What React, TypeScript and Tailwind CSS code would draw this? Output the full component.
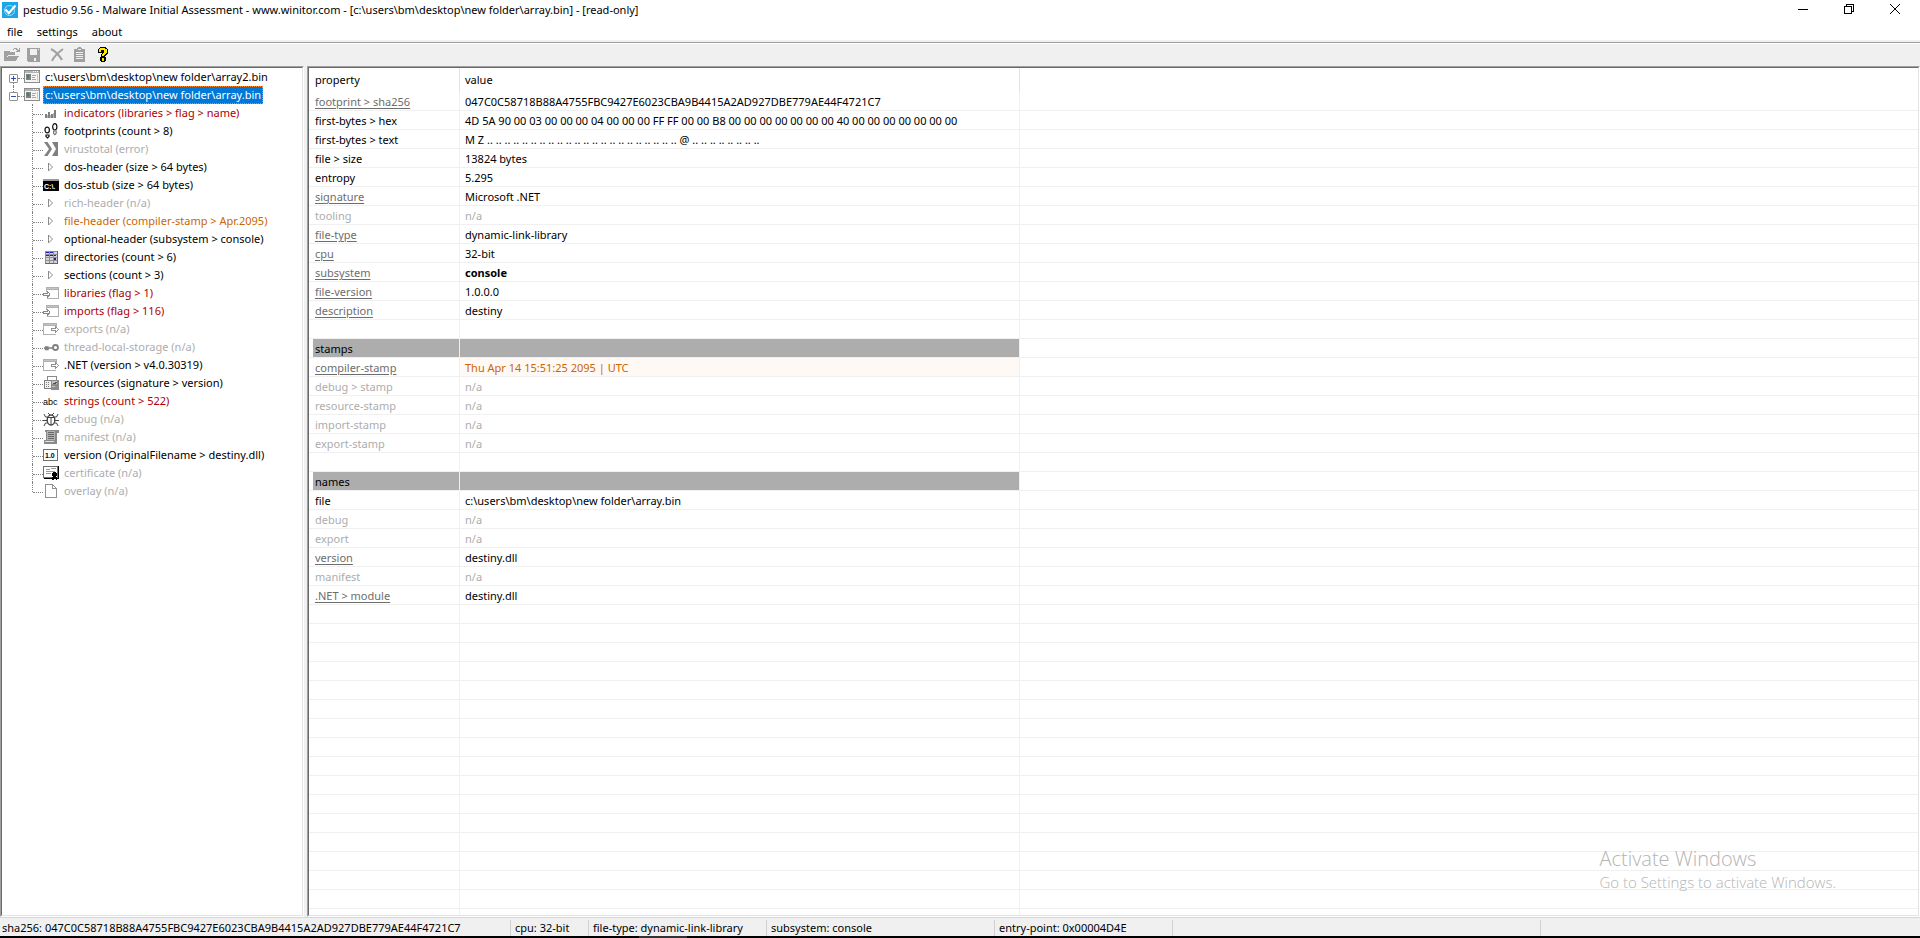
import { ReactNode, useState } from "react";

type Tone = "normal" | "muted" | "flag" | "warn";

const tones: Record<Tone, string> = {
  normal: "text-black",
  muted: "text-[#adadad]",
  flag: "text-[#ad0000]",
  warn: "text-[#cc6600]",
};

const Icon = ({ children }: { children: ReactNode }) => (
  <svg
    viewBox="0 0 16 16"
    shapeRendering="crispEdges"
    className="h-4 w-4 shrink-0"
    aria-hidden="true"
  >
    {children}
  </svg>
);

const AppIcon = () => (
  <svg viewBox="0 0 16 16" className="h-4 w-4 shrink-0" aria-hidden="true">
    <rect width="16" height="16" fill="#1ba5ea" />
    <circle cx="7.5" cy="8.5" r="5" fill="none" stroke="#9fdcf8" strokeWidth="1" />
    <path d="M3.5 7.5 6.8 11.2 13.5 3.5" fill="none" stroke="#fff" strokeWidth="2.2" />
  </svg>
);

const OpenIcon = () => (
  <Icon>
    <path d="M0 4h5l1 1h5v3H4l-3 6H0z" fill="#a0a0a0" />
    <path d="M4 9h11l-3 5H1z" fill="#a0a0a0" />
    <path d="M9 2h1V1h3v1h1v1h1V1h1v4h-4V4h1V3h-1V2h-2v1H9z" fill="#a0a0a0" />
    <path d="M4 8.500h8" stroke="#f0f0f0" />
  </Icon>
);

const SaveIcon = () => (
  <Icon>
    <path d="M0 1h13v14H1l-1-1z" fill="#a0a0a0" />
    <rect x="3" y="2" width="7" height="6" fill="#f0f0f0" />
    <rect x="7" y="11" width="2" height="3" fill="#f0f0f0" />
    <rect x="11" y="2" width="1" height="1" fill="#f0f0f0" />
  </Icon>
);

const DeleteIcon = () => (
  <svg viewBox="0 0 16 16" className="h-4 w-4 shrink-0" aria-hidden="true">
    <path d="M1 2c4 2 8 6 11 11M13 2C9 5 4 9 2 14" fill="none" stroke="#a0a0a0" strokeWidth="2" />
  </svg>
);

const ClipboardIcon = () => (
  <Icon>
    <path d="M1 2h3V1h1V0h3v1h1v1h3v13H1z" fill="#a0a0a0" />
    <path d="M3 5.5h7M3 7.5h7M3 9.5h7M3 11.5h7" stroke="#f0f0f0" />
    <rect x="5" y="2" width="3" height="1" fill="#f0f0f0" />
  </Icon>
);

const HelpIcon = () => (
  <Icon>
    <path
      d="M3 1h1V0h6v1h1v1h1v5h-1v1h-1v1H9v1h1v4H9v1H5v-1H4v-4h1V7h1V6H2V2h1z"
      fill="#000"
    />
    <path d="M4 1h5v1h2v4h-1v1H9v1H8v1H6V7h1V6h1V3H5v2H3V2h1zM6 11h2v3H6z" fill="#ffea00" />
  </Icon>
);

const BinIcon = () => (
  <Icon>
    <rect x="0.5" y="1.5" width="15" height="12" fill="#f4f4f4" stroke="#8c8c8c" />
    <rect x="1" y="2" width="14" height="2" fill="#b4b4b4" />
    <path d="M9 2h1v1H9zM11 2h1v1h-1zM13 2h1v1h-1z" fill="#fff" />
    <rect x="2" y="5" width="5" height="6" fill="#7c8482" />
    <rect x="3" y="6" width="2" height="3" fill="#3f7f78" />
    <path d="M8 6.500h4M8 8.500h3M8 10.500h4" stroke="#a8a8a8" />
    <path d="M13 5h1v7h-1z" fill="#c8c8c8" />
  </Icon>
);

const BarsIcon = () => (
  <Icon>
    <path d="M2 9h2v4H2zM5 7h2v6H5zM8 9h2v4H8zM11 5h2v8h-2z" fill="#808080" />
    <path d="M4 10h1v3H4zM7 10h1v3H7zM10 8h1v5h-1z" fill="#b8b8b8" />
  </Icon>
);

const FootprintsIcon = () => (
  <svg viewBox="0 0 16 16" className="h-4 w-4 shrink-0" aria-hidden="true">
    <g fill="#fff" stroke="#111" strokeWidth="1.2">
      <ellipse cx="4.2" cy="7" rx="2.2" ry="2.9" />
      <path d="M3 12h3v1.5L4.5 15 3 13.5z" />
      <ellipse cx="11.8" cy="3.8" rx="2.1" ry="3.2" />
      <path d="M10.6 8h2.6v2.2l-1.3 1.4-1.3-1.2z" stroke="#777" />
    </g>
  </svg>
);

const TotalIcon = () => (
  <svg viewBox="0 0 16 16" className="h-4 w-4 shrink-0" aria-hidden="true">
    <path d="M1 1h14v14H1l5-7z" fill="#808080" />
    <path d="M4.500 1H9L13 8 9 15H4.500L9 8z" fill="#fff" />
  </svg>
);

const ArrowIcon = () => (
  <svg viewBox="0 0 16 16" className="h-4 w-4 shrink-0" aria-hidden="true">
    <path d="M5.500 4v8L9.500 8z" fill="#fff" stroke="#8c8c8c" />
  </svg>
);

const ConsoleIcon = () => (
  <Icon>
    <rect x="0" y="2" width="16" height="12" fill="#000" />
    <rect x="0" y="2" width="16" height="2" fill="#9a9a9a" />
    <text x="1" y="12" fontSize="7" fontWeight="bold" fontFamily="Liberation Sans" fill="#fff">
      C:\.
    </text>
  </Icon>
);

const DirectoriesIcon = () => (
  <Icon>
    <rect x="2" y="2" width="12" height="12" fill="#d4d4d4" />
    <path d="M2 2h12v1H2zM2 5h12v1H2zM2 8h12v1H2zM2 11h12v1H2zM2 2h1v12H2zM6 2h1v12H6zM10 2h1v12h-1z" fill="#909090" />
    <path d="M3 3h3v1H3zM3 6h3v1H3zM7 3h3v1H7zM7 6h3v1H7zM11 6h2v1h-2zM11 9h2v2h-2z" fill="#1c1cc8" />
    <path d="M14 2h1v13H2v-1h12z" fill="#2a8080" />
  </Icon>
);

const ImportIcon = () => (
  <Icon>
    <path d="M3 2h13v12H4v-2h1v1h10V5H4v2H3z" fill="#b0b0b0" />
    <path d="M4 3h11v1H4z" fill="#c4c4c4" />
    <path d="M0 8h4V6h1v1h1v1h1v3H6v1H5v1H4v-2H0z" fill="#888" />
    <path d="M1 9h4V8h1v2H1z" fill="#fff" />
  </Icon>
);

const ExportIcon = () => (
  <Icon>
    <path d="M0 2h14v4h-1V5H1v8h12v1H0z" fill="#b0b0b0" />
    <path d="M1 3h12v1H1z" fill="#c4c4c4" />
    <path d="M8 7h4V5h1v1h1v1h1v1h1v1h-1v1h-1v1h-1v1h-1v-2H8z" fill="#909090" />
    <path d="M9 8h4V7h1v1h1v1h-1v1h-1V9H9z" fill="#fff" />
  </Icon>
);

const KeyIcon = () => (
  <svg viewBox="0 0 16 16" className="h-4 w-4 shrink-0" aria-hidden="true">
    <circle cx="12.500" cy="8.500" r="2.500" fill="#fff" stroke="#808080" strokeWidth="1.800" />
    <path d="M1 9h9M2.500 8h2.500v2.500H2.500z" fill="#808080" stroke="#808080" strokeWidth="1.400" />
  </svg>
);

const ResourcesIcon = () => (
  <Icon>
    <path d="M4 1h9v5H4z" fill="#fff" stroke="#8a8a8a" />
    <path d="M1 5h7v8H1z" fill="#f0f0f0" />
    <path d="M1 5h7v1H1zM1 5h1v9H1zM1 13h9v1H1zM3 7h1v1H3zM5 7h1v1H5zM3 9h1v1H3zM5 9h1v1H5zM3 11h1v1H3zM5 11h1v1H5z" fill="#808080" />
    <rect x="8" y="5" width="8" height="10" fill="#8c8c8c" />
    <path d="M9 6h5v3H9zM9 11h3v1H9z" fill="#c4c4c4" />
    <path d="M10 8h3v1h-3zM12 7h2v1h-2z" fill="#505050" />
  </Icon>
);

const StringsIcon = () => (
  <Icon>
    <text x="0" y="12" fontSize="9" fontFamily="Liberation Sans" fill="#000">
      abc
    </text>
  </Icon>
);

const BugIcon = () => (
  <svg viewBox="0 0 16 16" className="h-4 w-4 shrink-0" aria-hidden="true">
    <ellipse cx="8" cy="9" rx="3.800" ry="5" fill="#fff" stroke="#444" strokeWidth="1.400" />
    <path
      d="M4.500 6.500h7M8 7v7M5 2l2 2M11 2 9 4M1 3l1.500 3h2M15 3l-1.500 3h-2M0 9.500h4M12 9.500h4M1 15l1.500-3h2M15 15l-1.500-3h-2"
      fill="none"
      stroke="#444"
    />
  </svg>
);

const ManifestIcon = () => (
  <Icon>
    <path d="M2 1h14v3h-2v11H1v-4h2V3H2z" fill="#8a8a8a" />
    <path d="M4 2h8v9H4z" fill="#b4b4b4" />
    <path d="M5 3.500h6M5 5.500h6M5 7.500h6M5 9.500h6" stroke="#666" />
    <path d="M2 12h9v1H2z" fill="#ddd" />
  </Icon>
);

const VersionIcon = () => (
  <Icon>
    <rect x="0.500" y="2.500" width="14" height="11" fill="#fff" stroke="#707070" />
    <text x="2" y="11" fontSize="7" fontWeight="bold" fontFamily="Liberation Sans" fill="#000">
      1.0
    </text>
  </Icon>
);

const CertificateIcon = () => (
  <Icon>
    <rect x="0.500" y="1.500" width="14" height="11" fill="#fff" stroke="#707070" />
    <path d="M15 1h1v12h-1zM1 13h15v1H1z" fill="#000" />
    <path d="M3 4.500h4M8 3.500h5M3 6.500h9M3 8.500h5" stroke="#999" />
    <path d="M10 7h3v1h1v3h-1v1h1v3h-1v-1h-2v1H9v-3h1v-1H9V8h1z" fill="#000" />
  </Icon>
);

const OverlayIcon = () => (
  <Icon>
    <path d="M2.500 1.500h7l4 4v9h-11z" fill="#fff" stroke="#909090" />
    <path d="M9.500 1.500v4h4" fill="none" stroke="#909090" />
  </Icon>
);

type Node = { icon: () => ReactNode; label: string; tone?: Tone };

const nodes: Node[] = [
  { icon: BarsIcon, label: "indicators (libraries > flag > name)", tone: "flag" },
  { icon: FootprintsIcon, label: "footprints (count > 8)" },
  { icon: TotalIcon, label: "virustotal (error)", tone: "muted" },
  { icon: ArrowIcon, label: "dos-header (size > 64 bytes)" },
  { icon: ConsoleIcon, label: "dos-stub (size > 64 bytes)" },
  { icon: ArrowIcon, label: "rich-header (n/a)", tone: "muted" },
  { icon: ArrowIcon, label: "file-header (compiler-stamp > Apr.2095)", tone: "warn" },
  { icon: ArrowIcon, label: "optional-header (subsystem > console)" },
  { icon: DirectoriesIcon, label: "directories (count > 6)" },
  { icon: ArrowIcon, label: "sections (count > 3)" },
  { icon: ImportIcon, label: "libraries (flag > 1)", tone: "flag" },
  { icon: ImportIcon, label: "imports (flag > 116)", tone: "flag" },
  { icon: ExportIcon, label: "exports (n/a)", tone: "muted" },
  { icon: KeyIcon, label: "thread-local-storage (n/a)", tone: "muted" },
  { icon: ExportIcon, label: ".NET (version > v4.0.30319)" },
  { icon: ResourcesIcon, label: "resources (signature > version)" },
  { icon: StringsIcon, label: "strings (count > 522)", tone: "flag" },
  { icon: BugIcon, label: "debug (n/a)", tone: "muted" },
  { icon: ManifestIcon, label: "manifest (n/a)", tone: "muted" },
  { icon: VersionIcon, label: "version (OriginalFilename > destiny.dll)" },
  { icon: CertificateIcon, label: "certificate (n/a)", tone: "muted" },
  { icon: OverlayIcon, label: "overlay (n/a)", tone: "muted" },
];

type Row = {
  name?: string;
  value?: string;
  kind?: "link" | "muted" | "section" | "stamp" | "bold";
};

const rows: Row[] = [
  { name: "footprint > sha256", value: "047C0C58718B88A4755FBC9427E6023CBA9B4415A2AD927DBE779AE44F4721C7", kind: "link" },
  { name: "first-bytes > hex", value: "4D 5A 90 00 03 00 00 00 04 00 00 00 FF FF 00 00 B8 00 00 00 00 00 00 00 40 00 00 00 00 00 00 00" },
  { name: "first-bytes > text", value: "M Z .. .. .. .. .. .. .. .. .. .. .. .. .. .. .. .. .. .. .. .. .. .. @ .. .. .. .. .. .. .. .." },
  { name: "file > size", value: "13824 bytes" },
  { name: "entropy", value: "5.295" },
  { name: "signature", value: "Microsoft .NET", kind: "link" },
  { name: "tooling", value: "n/a", kind: "muted" },
  { name: "file-type", value: "dynamic-link-library", kind: "link" },
  { name: "cpu", value: "32-bit", kind: "link" },
  { name: "subsystem", value: "console", kind: "bold" },
  { name: "file-version", value: "1.0.0.0", kind: "link" },
  { name: "description", value: "destiny", kind: "link" },
  {},
  { name: "stamps", kind: "section" },
  { name: "compiler-stamp", value: "Thu Apr 14 15:51:25 2095 | UTC", kind: "stamp" },
  { name: "debug > stamp", value: "n/a", kind: "muted" },
  { name: "resource-stamp", value: "n/a", kind: "muted" },
  { name: "import-stamp", value: "n/a", kind: "muted" },
  { name: "export-stamp", value: "n/a", kind: "muted" },
  {},
  { name: "names", kind: "section" },
  { name: "file", value: "c:\\users\\bm\\desktop\\new folder\\array.bin" },
  { name: "debug", value: "n/a", kind: "muted" },
  { name: "export", value: "n/a", kind: "muted" },
  { name: "version", value: "destiny.dll", kind: "link" },
  { name: "manifest", value: "n/a", kind: "muted" },
  { name: ".NET > module", value: "destiny.dll", kind: "link" },
];

// the grid keeps drawing empty rows down to the bottom of the pane
const emptyRows: Row[] = Array.from({ length: 17 }, () => ({}));

const TitleBar = () => (
  <header className="flex h-[22px] items-start justify-between pr-[2px]">
    <div className="flex items-center gap-[5px] pl-[2px]">
      <AppIcon />
      <h1 className="leading-[20px]">
        pestudio 9.56 - Malware Initial Assessment - www.winitor.com -
        [c:\users\bm\desktop\new folder\array.bin] - [read-only]
      </h1>
    </div>
    <div className="flex">
      <button aria-label="Minimize" className="flex h-[18px] w-[46px] items-center justify-center">
        <svg viewBox="0 0 10 10" shapeRendering="crispEdges" className="h-[10px] w-[10px]">
          <path d="M0 5.500h10" stroke="#000" />
        </svg>
      </button>
      <button aria-label="Restore" className="flex h-[18px] w-[46px] items-center justify-center">
        <svg viewBox="0 0 10 10" shapeRendering="crispEdges" className="h-[10px] w-[10px]">
          <path d="M0.500 2.500h7v7h-7zM2.500 2.500v-2h7v7h-2" fill="none" stroke="#000" />
        </svg>
      </button>
      <button aria-label="Close" className="flex h-[18px] w-[46px] items-center justify-center">
        <svg viewBox="0 0 10 10" className="h-[10px] w-[10px]">
          <path d="M0 0l10 10M10 0 0 10" stroke="#000" />
        </svg>
      </button>
    </div>
  </header>
);

const MenuBar = () => (
  <nav className="flex h-[18px] items-end gap-[14px] pl-[7px]">
    <button className="leading-[16px]">file</button>
    <button className="leading-[16px]">settings</button>
    <button className="leading-[16px]">about</button>
  </nav>
);

const Toolbar = () => (
  <div className="border-t-2 border-[#f0f0f0]">
    <div className="border-t border-[#a0a0a0]">
      <div className="flex h-[23px] items-center gap-[7px] border-t border-white bg-[#f0f0f0] pl-1">
        <button aria-label="open"><OpenIcon /></button>
        <button aria-label="save"><SaveIcon /></button>
        <button aria-label="delete"><DeleteIcon /></button>
        <button aria-label="copy"><ClipboardIcon /></button>
        <button aria-label="help"><HelpIcon /></button>
      </div>
    </div>
  </div>
);

// sunken two-step border round a pane
const Pane = ({ className, children }: { className: string; children: ReactNode }) => (
  <section className={`flex border border-t-[#a0a0a0] border-r-white border-b-white border-l-[#a0a0a0] ${className}`}>
    <div className="min-h-0 min-w-0 flex-1 overflow-hidden border border-t-[#696969] border-r-[#e3e3e3] border-b-[#e3e3e3] border-l-[#696969] bg-white">
      {children}
    </div>
  </section>
);

type RootProps = {
  label: string;
  open: boolean;
  first?: boolean;
  selected?: boolean;
  onToggle: () => void;
};

const RootRow = ({ label, open, first, selected, onToggle }: RootProps) => (
  <div className="flex h-[18px] items-center pl-[7px]">
    <div className="flex h-[18px] w-[9px] flex-col items-center">
      <span className={`h-[6px] border-l border-dotted ${first ? "border-transparent" : "border-[#808080]"}`} />
      <button
        aria-label={open ? "collapse" : "expand"}
        onClick={onToggle}
        className="flex h-[9px] w-[9px] items-center justify-center rounded-[1px] border border-[#919191] bg-white"
      >
        <svg viewBox="0 0 5 5" shapeRendering="crispEdges" className="h-[5px] w-[5px]">
          <path d={open ? "M0 2h5v1H0z" : "M0 2h5v1H0zM2 0h1v5H2z"} fill="#2a4fb0" />
        </svg>
      </button>
      <span className={`h-[3px] border-l border-dotted ${first ? "border-[#808080]" : "border-transparent"}`} />
    </div>
    <span className="mt-[2px] w-[6px] border-t border-dotted border-[#808080]" />
    <BinIcon />
    <button
      className={`ml-[3px] border border-dotted px-px leading-[16px] ${
        selected ? "border-[#ff8728] bg-[#0078d7] text-white" : "border-transparent"
      }`}
    >
      {label}
    </button>
  </div>
);

const Tree = () => {
  const [open, setOpen] = useState([false, true]);

  const toggle = (i: number) => {
    setOpen((prev) => prev.map((val, n) => (n === i ? !val : val)));
  };

  return (
    <ul className="whitespace-nowrap">
      <li>
        <RootRow
          first
          label="c:\users\bm\desktop\new folder\array2.bin"
          open={open[0]}
          onToggle={() => toggle(0)}
        />
      </li>
      <li>
        <RootRow
          selected
          label="c:\users\bm\desktop\new folder\array.bin"
          open={open[1]}
          onToggle={() => toggle(1)}
        />
        {open[1] && (
          <ul>
            {nodes.map(({ icon: NodeIcon, label, tone = "normal" }, i) => (
              <li key={label} className="flex h-[18px] items-center pl-[30px]">
                <span
                  className={`w-[11px] self-start border-l border-dotted border-[#808080] ${
                    i === nodes.length - 1 ? "h-[10px]" : "h-[18px]"
                  }`}
                >
                  <span className="block h-[11px] border-b border-dotted border-[#808080]" />
                </span>
                <NodeIcon />
                <button className={`pl-[5px] ${tones[tone]}`}>{label}</button>
              </li>
            ))}
          </ul>
        )}
      </li>
    </ul>
  );
};

const GridRow = ({ name, value, kind }: Row) => {
  const isLink = kind === "link" || kind === "stamp" || kind === "bold";
  const muted = kind === "muted" ? "text-[#adadad]" : "";

  return (
    <tr className="h-[19px] leading-[16px]">
      <td className={`border-r border-b border-[#f0f0f0] p-0 pl-1 ${muted}`}>
        <div className={`h-[18px] pt-[2px] pl-[2px] ${kind === "section" ? "bg-[#adadad]" : ""}`}>
          {isLink ? (
            <a href="#" className="text-[#6d6d6d] underline underline-offset-2">
              {name}
            </a>
          ) : (
            name
          )}
        </div>
      </td>
      <td
        className={`border-r border-b border-[#f0f0f0] p-0 pt-[2px] pl-[5px] ${muted} ${
          kind === "section" ? "bg-[#adadad] bg-clip-padding" : ""
        } ${kind === "stamp" ? "bg-[#fff9f5] text-[#cc6600]" : ""} ${kind === "bold" ? "font-bold" : ""}`}
      >
        {value}
      </td>
      <td className="border-b border-[#f0f0f0] p-0" />
    </tr>
  );
};

const PropertyGrid = () => (
  <table className="w-full table-fixed border-separate border-spacing-0 whitespace-nowrap">
    <colgroup>
      <col className="w-[151px]" />
      <col className="w-[560px]" />
      <col />
    </colgroup>
    <thead>
      <tr className="h-[24px]">
        <th className="border-r border-[#e5e5e5] p-0 pl-[6px] text-left font-normal">property</th>
        <th className="border-r border-[#e5e5e5] p-0 pl-[5px] text-left font-normal">value</th>
        <td />
      </tr>
    </thead>
    <tbody>
      {[...rows, ...emptyRows].map((row, i) => (
        <GridRow key={i} {...row} />
      ))}
    </tbody>
  </table>
);

const StatusBar = () => (
  <footer className="flex h-[19px] items-end border-t border-[#d7d7d7] bg-[#f0f0f0] leading-[16px] whitespace-nowrap">
    <span className="w-[511px] border-r border-[#d0d0d0] pl-[2px]">
      sha256: 047C0C58718B88A4755FBC9427E6023CBA9B4415A2AD927DBE779AE44F4721C7
    </span>
    <span className="w-[78px] border-r border-[#d0d0d0] pl-1">cpu: 32-bit</span>
    <span className="w-[178px] border-r border-[#d0d0d0] pl-1">file-type: dynamic-link-library</span>
    <span className="w-[228px] border-r border-[#d0d0d0] pl-1">subsystem: console</span>
    <span className="w-[178px] border-r border-[#d0d0d0] pl-1">entry-point: 0x00004D4E</span>
    <span className="h-[16px] w-[368px] border-r border-[#d0d0d0]" />
  </footer>
);

export default function App() {
  return (
    <div className="relative flex h-screen flex-col overflow-hidden bg-white font-['Noto_Sans',sans-serif] text-[11px] leading-[18px] text-black">
      <TitleBar />
      <MenuBar />
      <Toolbar />
      <main className="flex min-h-0 flex-1 bg-[#f0f0f0]">
        <Pane className="w-[304px] shrink-0">
          <Tree />
        </Pane>
        <Pane className="ml-[3px] min-w-0 flex-1">
          <PropertyGrid />
        </Pane>
      </main>
      <StatusBar />
      <div className="flex h-[2px] bg-black">
        <span className="ml-[639px] w-[48px] bg-[#333333]" />
      </div>
      {/* activation watermark */}
      <div className="pointer-events-none absolute right-[84px] bottom-[45px] font-['Open_Sans',sans-serif] font-light text-[#b4b4b4]">
        <p className="text-[20px] leading-[24px]">Activate Windows</p>
        <p className="text-[15px] leading-[22px]">Go to Settings to activate Windows.</p>
      </div>
    </div>
  );
}
